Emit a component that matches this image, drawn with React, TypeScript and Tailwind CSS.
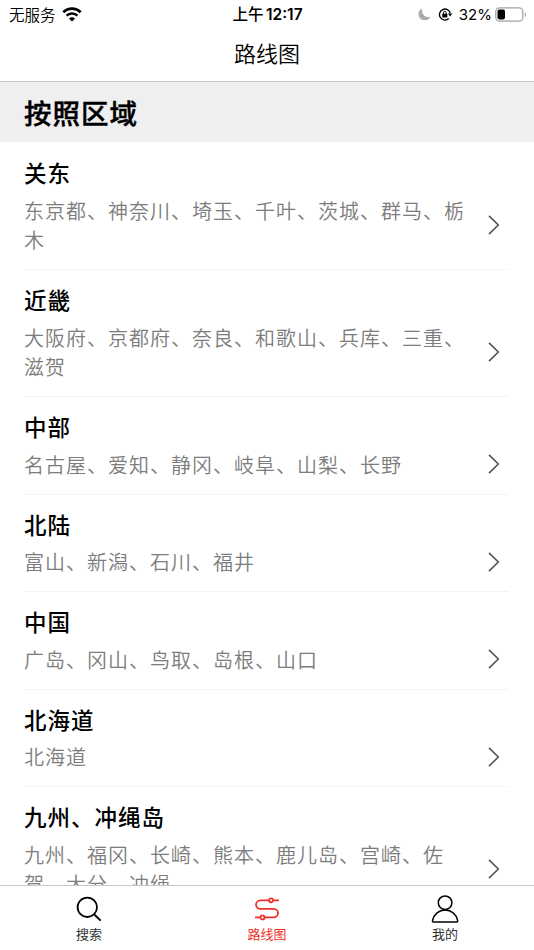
import clsx from "clsx";
import type { ReactNode } from "react";

type Region = {
  name: string;
  areas: string;
};

const REGIONS: Region[] = [
  { name: "关东", areas: "东京都、神奈川、埼玉、千叶、茨城、群马、栃木" },
  { name: "近畿", areas: "大阪府、京都府、奈良、和歌山、兵库、三重、滋贺" },
  { name: "中部", areas: "名古屋、爱知、静冈、岐阜、山梨、长野" },
  { name: "北陆", areas: "富山、新潟、石川、福井" },
  { name: "中国", areas: "广岛、冈山、鸟取、岛根、山口" },
  { name: "北海道", areas: "北海道" },
  { name: "九州、冲绳岛", areas: "九州、福冈、长崎、熊本、鹿儿岛、宫崎、佐贺、大分、冲绳" },
];

const WifiIcon = () => (
  <svg width="20" height="15" viewBox="0 0 20 15" fill="none" stroke="#000">
    <path d="M1.3 5.2a12.6 12.6 0 0 1 17.4 0" strokeWidth="2.7" />
    <path d="M4.5 8.7a8 8 0 0 1 11 0" strokeWidth="2.5" />
    <path d="M7 11.6a4.4 4.4 0 0 1 6 0L10 14.6z" fill="#000" stroke="none" />
  </svg>
);

const MoonIcon = () => (
  <svg width="13" height="13" viewBox="0 0 13 13" fill="#ababab">
    <path d="M4.3.6C.8 2-.6 6 1.200 9.100c2.400 4.400 9.300 4.200 11.200-.4C7.200 10.200 3 6 4.300.6z" />
  </svg>
);

const RotationLockIcon = () => (
  <svg width="15" height="13" viewBox="0 0 15 13" fill="none" stroke="#000">
    <path d="M10.8 10.5A5.5 5.5 0 1 1 12.3 5.2" strokeWidth="1.3" />
    <path d="M9.9 5.4h4.4l-2.2 3z" fill="#000" stroke="none" />
    <rect x="4.3" y="5.8" width="5" height="3.7" rx=".5" fill="#000" stroke="none" />
    <path d="M5.4 6V4.7a1.4 1.4 0 0 1 2.8 0V6" strokeWidth="1" />
  </svg>
);

const BatteryIcon = () => (
  <svg width="32" height="15" viewBox="0 0 32 15" fill="none">
    <rect x=".8" y=".8" width="27" height="13.4" rx="3.8" stroke="#a3a3a3" strokeWidth="1.3" />
    <rect x="2.5" y="2.6" width="7.5" height="9.8" rx="1.8" fill="#000" />
    <path d="M29.8 5c1.7.7 1.7 4.300 0 5z" fill="#a3a3a3" />
  </svg>
);

const ChevronIcon = () => (
  <svg width="12" height="20" viewBox="0 0 12 20" fill="none" stroke="#555" strokeWidth="1.6">
    <path d="M1 .9 10.3 10 1 19.1" />
  </svg>
);

const SearchIcon = () => (
  <svg width="26" height="26" viewBox="0 0 26 26" fill="none" stroke="#000" strokeWidth="1.8">
    <circle cx="11.3" cy="11.3" r="9.7" />
    <path d="m18.6 18.8 6 5.8" strokeWidth="2" />
  </svg>
);

const RouteIcon = () => (
  <svg width="26" height="24" viewBox="0 0 26 24" fill="none" stroke="#f0302a" strokeWidth="1.8">
    <path d="M25 3.3h-5.7M14.9 3.3H6.3a4.25 4.25 0 0 0 0 8.500h13.400a4.250 4.250 0 0 1 0 8.600H10.700M6.300 20.400H1" />
    <circle cx="17.1" cy="3.3" r="2" />
    <circle cx="8.5" cy="20.4" r="2" />
  </svg>
);

const UserIcon = () => (
  <svg width="28" height="28" viewBox="0 0 28 28" fill="none" stroke="#000" strokeWidth="1.5">
    <circle cx="14.1" cy="7.7" r="6.8" />
    <path d="M2.5 26.9h23.2c.8 0 1.2-.6 1-1.4C25.3 19.3 20.3 15 14.1 15S2.9 19.3 1.5 25.5c-.2.8.2 1.4 1 1.4z" strokeLinejoin="round" />
  </svg>
);

const StatusBar = () => (
  <div className="grid h-[27px] grid-cols-3 items-center pl-[9px] pr-[7px] text-[15px] leading-[27px]">
    <div className="flex items-center gap-[6px]">
      <span className="text-[15.5px] font-[350]">无服务</span>
      <WifiIcon />
    </div>
    <div className="-ml-px text-center text-[15.5px] font-medium whitespace-nowrap">
      上午 <span className="-ml-px font-['Inter'] font-semibold">12:17</span>
    </div>
    <div className="flex items-center justify-end">
      <MoonIcon />
      <span className="ml-[7px]">
        <RotationLockIcon />
      </span>
      <span className="ml-[6px] mr-[3px] font-['Inter'] text-[15px]">32%</span>
      <BatteryIcon />
    </div>
  </div>
);

const RegionRow = ({ name, areas }: Region) => (
  <li className="border-b border-[#f3f3f3] pt-[14px] pb-[14.5px]">
    <h2 className="text-[22.5px] leading-[30px] font-medium tracking-[1px]">
      {name}
    </h2>
    <div className="mt-[8.5px] flex items-center justify-between pr-2">
      <p className="w-[445px] text-[20px] leading-[29.5px] font-[350] tracking-[1px] text-[#7c7c7c]">
        {areas}
      </p>
      <ChevronIcon />
    </div>
  </li>
);

const TabItem = ({
  label,
  active,
  children,
}: {
  label: string;
  active?: boolean;
  children: ReactNode;
}) => (
  <button className="flex flex-1 flex-col items-center pt-[9px]">
    <span className="flex h-7 items-center">{children}</span>
    <span
      className={clsx(
        "mt-[2px] text-[13px] leading-[18px]",
        active ? "text-[#f0302a]" : "text-[#333]",
      )}
    >
      {label}
    </span>
  </button>
);

export default function App() {
  return (
    <div className="flex h-screen flex-col overflow-hidden bg-white font-['Noto_Sans_CJK_SC',sans-serif] text-black">
      <header className="h-[82px] shrink-0 border-b border-[#c4c4c4]">
        <StatusBar />
        <h1 className="text-center text-[22px] leading-[51px] font-[350]">路线图</h1>
      </header>

      <main className="min-h-0 flex-1 overflow-hidden">
        <div className="h-[60px] bg-[#efefef] px-6 text-[27.5px] leading-[60px] font-medium tracking-[1px] [-webkit-text-stroke:0.4px_black]">
          按照区域
        </div>
        <ul className="pt-px pr-[26px] pl-6">
          {REGIONS.map((region) => (
            <RegionRow key={region.name} {...region} />
          ))}
        </ul>
      </main>

      <nav className="flex h-[65px] shrink-0 border-t border-[#c8c8c8] bg-white">
        <TabItem label="搜索">
          <SearchIcon />
        </TabItem>
        <TabItem label="路线图" active>
          <RouteIcon />
        </TabItem>
        <TabItem label="我的">
          <UserIcon />
        </TabItem>
      </nav>
    </div>
  );
}
